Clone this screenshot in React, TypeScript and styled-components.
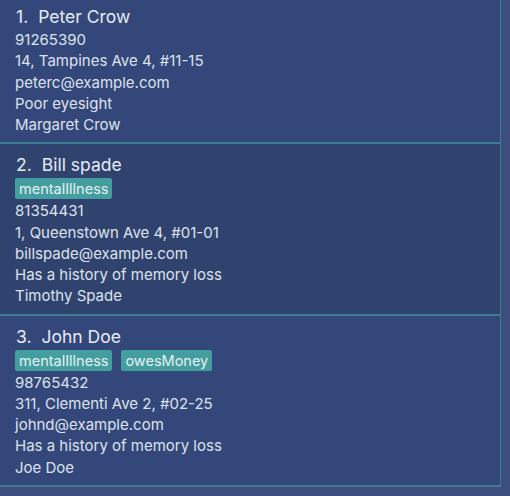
import React from 'react';
import styled, { createGlobalStyle } from 'styled-components';

interface Person {
  name: string;
  tags: string[];
  phone: string;
  address: string;
  email: string;
  remark: string;
  contact: string;
}

const people: Person[] = [
  {
    name: 'Peter Crow',
    tags: [],
    phone: '91265390',
    address: '14, Tampines Ave 4, #11-15',
    email: 'peterc@example.com',
    remark: 'Poor eyesight',
    contact: 'Margaret Crow',
  },
  {
    name: 'Bill spade',
    tags: ['mentalIllness'],
    phone: '81354431',
    address: '1, Queenstown Ave 4, #01-01',
    email: 'billspade@example.com',
    remark: 'Has a history of memory loss',
    contact: 'Timothy Spade',
  },
  {
    name: 'John Doe',
    tags: ['mentalIllness', 'owesMoney'],
    phone: '98765432',
    address: '311, Clementi Ave 2, #02-25',
    email: 'johnd@example.com',
    remark: 'Has a history of memory loss',
    contact: 'Joe Doe',
  },
];

const GlobalStyle = createGlobalStyle`
  html, body {
    margin: 0;
    padding: 0;
    background: #3c4e7e;
    height: 100%;
    overflow: hidden;
  }
  body {
    font-family: Inter, "Open Sans", sans-serif;
  }
`;

// list is scrolled a few pixels down, so the first card's top is cut off
const ListView = styled.div`
  width: 501px;
  margin-top: -4px;
  display: flex;
  flex-direction: column;
`;

const Card = styled.div<{ $odd: boolean }>`
  background: ${(p) => (p.$odd ? '#30436f' : '#34477a')};
  border-right: 1px solid #3d7d92;
  border-bottom: 2px solid #3d7d92;
  padding: 9px 15px 7px;
  display: flex;
  flex-direction: column;
`;

const Title = styled.div`
  font-size: 17.5px;
  color: #e6ebf3;
  line-height: 24px;
  display: flex;
  gap: 10px;
  padding-left: 1px;
`;

const Tags = styled.div`
  display: flex;
  gap: 9px;
  margin: 1px 0;
`;

const Tag = styled.span`
  background: #449e9f;
  color: #e4f1f1;
  font-size: 14.5px;
  line-height: 21px;
  padding: 0 4px;
  border-radius: 2px;
`;

const Line = styled.div`
  font-size: 15px;
  line-height: 21.25px;
  color: #dde2ec;
`;

export default function App() {
  return (
    <>
      <GlobalStyle />
      <ListView>
        {people.map((p, i) => (
          <Card key={p.name} $odd={i % 2 === 1}>
            <Title>
              <span>{i + 1}.</span>
              <span>{p.name}</span>
            </Title>
            {p.tags.length > 0 && (
              <Tags>
                {p.tags.map((t) => (
                  <Tag key={t}>{t}</Tag>
                ))}
              </Tags>
            )}
            <Line>{p.phone}</Line>
            <Line>{p.address}</Line>
            <Line>{p.email}</Line>
            <Line>{p.remark}</Line>
            <Line>{p.contact}</Line>
          </Card>
        ))}
      </ListView>
    </>
  );
}
